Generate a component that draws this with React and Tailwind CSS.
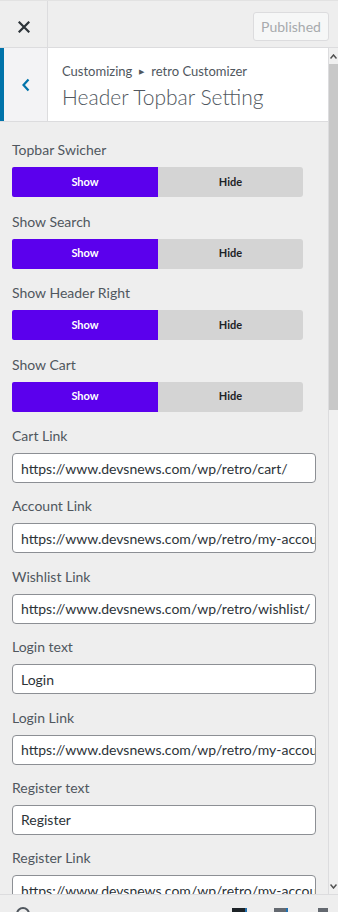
import React from "react";

const font = { fontFamily: 'Lato, "Open Sans", sans-serif' };

function Toggle({ label }) {
  return (
    <div className="mb-[14.5px]">
      <div className="h-[20px] leading-[20px] text-[14px] text-[#50575e] mb-[7px]">{label}</div>
      <div className="flex w-[291px] h-[30px]">
        <div className="w-[146px] bg-[#5b00ed] text-white text-[11px] font-bold flex items-center justify-center rounded-l-[2px]">
          Show
        </div>
        <div className="flex-1 bg-[#d4d4d4] text-[#1d2327] text-[11px] font-bold flex items-center justify-center rounded-r-[3px]">
          Hide
        </div>
      </div>
    </div>
  );
}

function Field({ label, value }) {
  return (
    <div className="mb-[13.4px]">
      <div className="h-[20px] leading-[20px] text-[14px] text-[#50575e] mb-[7px]">{label}</div>
      <div className="w-[304px] h-[30px] bg-white border border-[#8c8f94] rounded-[4px] px-[8px] flex items-center overflow-hidden">
        <span className="text-[14px] text-[#2c3338] whitespace-nowrap">{value}</span>
      </div>
    </div>
  );
}

export default function App() {
  return (
    <div className="w-[338px] h-[912px] bg-[#eeeeee] overflow-hidden flex flex-col" style={font}>
      {/* top bar */}
      <div className="h-[48px] flex border-b border-[#dcdcde] border-t border-t-[#e2e2e2] shrink-0">
        <div className="w-[48px] border-r border-[#dcdcde] flex items-center justify-center pt-[6px]">
          <svg width="12" height="12" viewBox="0 0 12 12">
            <path d="M1.5 1.5 L10.5 10.5 M10.5 1.5 L1.5 10.5" stroke="#2c3338" strokeWidth="2.2" strokeLinecap="square" />
          </svg>
        </div>
        <div className="flex-1 flex items-center justify-end pr-[9px] pt-[5px]">
          <div className="h-[29px] w-[76px] border border-[#dcdcde] bg-[#f6f7f7] rounded-[3px] text-[14px] text-[#a7aaad] flex items-center justify-center">
            Published
          </div>
        </div>
      </div>

      <div className="flex flex-1 min-h-0">
        <div className="flex-1 min-w-0 flex flex-col border-r border-[#dcdcde]">
          {/* section header */}
          <div className="h-[74px] bg-white flex border-b border-[#dcdcde] shrink-0">
            <div className="w-[48px] bg-[#f3f3f5] border-l-[4px] border-[#0073aa] border-r border-r-[#dcdcde] flex items-center justify-center">
              <svg width="10" height="14" viewBox="0 0 10 14">
                <path d="M7.5 1.5 L2.5 7 L7.5 12.5" fill="none" stroke="#0073aa" strokeWidth="2.2" />
              </svg>
            </div>
            <div className="pl-[14px] pt-[14px]">
              <div className="text-[13px] text-[#50575e] leading-[18px] flex items-center">
                Customizing
                <span className="mx-[7px] text-[7px] text-[#50575e]">▶</span>
                retro Customizer
              </div>
              <div className="text-[21px] font-light text-[#50575e] leading-[26px] mt-[4px]">Header Topbar Setting</div>
            </div>
          </div>

          <div className="flex-1 overflow-hidden pl-[12px] pt-[18px]">
            <Toggle label="Topbar Swicher" />
            <Toggle label="Show Search" />
            <Toggle label="Show Header Right" />
            <Toggle label="Show Cart" />
            <Field label="Cart Link" value="https://www.devsnews.com/wp/retro/cart/" />
            <Field label="Account Link" value="https://www.devsnews.com/wp/retro/my-account/" />
            <Field label="Wishlist Link" value="https://www.devsnews.com/wp/retro/wishlist/" />
            <Field label="Login text" value="Login" />
            <Field label="Login Link" value="https://www.devsnews.com/wp/retro/my-account/" />
            <Field label="Register text" value="Register" />
            <Field label="Register Link" value="https://www.devsnews.com/wp/retro/my-account/" />
          </div>
        </div>

        {/* scrollbar */}
        <div className="w-[9px] flex flex-col bg-[#f0f0f0] shrink-0">
          <div className="h-[16px] flex items-center justify-center">
            <svg width="7" height="5" viewBox="0 0 7 5">
              <path d="M0.5 4.5 L3.5 1 L6.5 4.5" fill="none" stroke="#505050" strokeWidth="1.5" />
            </svg>
          </div>
          <div className="h-[346px] bg-[#c8c8c8]"></div>
          <div className="flex-1"></div>
          <div className="h-[16px] flex items-center justify-center">
            <svg width="7" height="5" viewBox="0 0 7 5">
              <path d="M0.5 0.5 L3.5 4 L6.5 0.5" fill="none" stroke="#505050" strokeWidth="1.5" />
            </svg>
          </div>
        </div>
      </div>

      {/* footer */}
      <div className="h-[18px] shrink-0 border-t border-[#dcdcde] bg-[#eeeeee] relative">
        <div className="absolute left-[16px] top-[12px] w-[14px] h-[14px] rounded-full border-2 border-[#50575e]"></div>
        <div className="absolute left-[232px] top-[13px] w-[15px] h-[12px] bg-[#1d2327] border-r-2 border-[#2271b1]"></div>
        <div className="absolute left-[274px] top-[13px] w-[14px] h-[12px] bg-[#646970] border-r-2 border-[#2271b1]"></div>
        <div className="absolute left-[318px] top-[13px] w-[10px] h-[12px] bg-[#646970]"></div>
      </div>
    </div>
  );
}
